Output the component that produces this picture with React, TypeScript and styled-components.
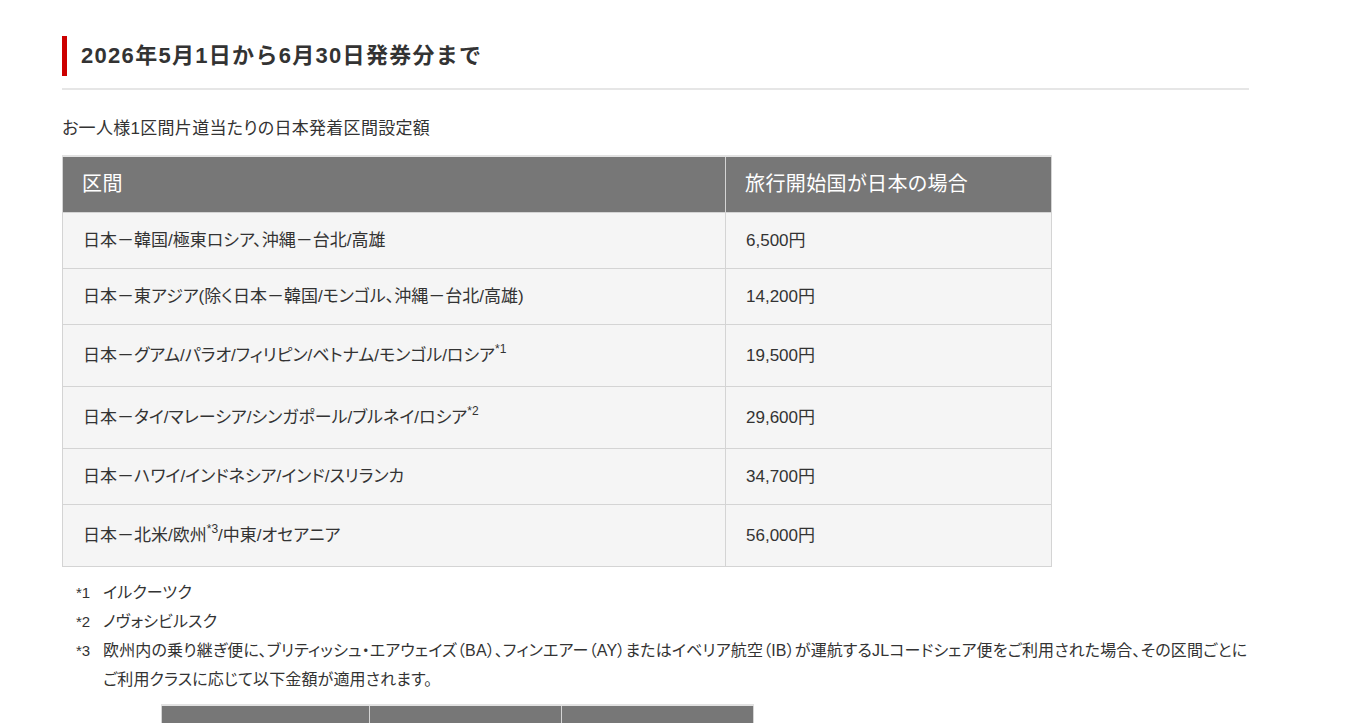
import styled, { createGlobalStyle } from "styled-components";

const GlobalStyle = createGlobalStyle`
  body {
    margin: 0;
    background: #fff;
    color: #333;
    font-family: "Liberation Sans", "Noto Sans CJK JP", sans-serif;
    font-feature-settings: "palt";
  }
`;

const fares = [
  { route: "日本－韓国/極東ロシア、沖縄－台北/高雄", price: "6,500円" },
  { route: "日本－東アジア(除く日本－韓国/モンゴル、沖縄－台北/高雄)", price: "14,200円" },
  { route: "日本－グアム/パラオ/フィリピン/ベトナム/モンゴル/ロシア", sup: "*1", price: "19,500円" },
  { route: "日本－タイ/マレーシア/シンガポール/ブルネイ/ロシア", sup: "*2", price: "29,600円" },
  { route: "日本－ハワイ/インドネシア/インド/スリランカ", price: "34,700円" },
  { route: "日本－北米/欧州", sup: "*3", rest: "/中東/オセアニア", price: "56,000円" },
];

const Page = styled.main`
  padding: 36px 0 0 62px;
  width: 1187px;
`;

const HeadingWrap = styled.div`
  padding-bottom: 12px;
  border-bottom: 2px solid #e6e6e6;
`;

const Heading = styled.h2`
  margin: 0;
  padding-left: 14px;
  border-left: 5px solid #cc0000;
  font-size: 22px;
  font-weight: 700;
  letter-spacing: 1.3px;
  line-height: 40px;
  color: #333;
  font-feature-settings: normal;
`;

const Lead = styled.p`
  margin: 27px 0 0;
  font-size: 17px;
  letter-spacing: 0.3px;
  line-height: 24px;
`;

const FareTable = styled.table`
  margin-top: 14px;
  width: 990px;
  table-layout: fixed;
  border-collapse: collapse;
  border-top: 2px solid #e2e2e2;
`;

const HeadCell = styled.th<{ $w?: number }>`
  box-sizing: border-box;
  width: ${(p) => (p.$w ? `${p.$w}px` : "auto")};
  background: #777;
  color: #fff;
  text-align: left;
  font-weight: 400;
  font-size: 20px;
  letter-spacing: 0.4px;
  line-height: 25px;
  padding: 15px 18px 15px 19px;
  border: 1px solid #d4d4d4;
  border-top: none;
  border-bottom: none;
`;

const Cell = styled.td<{ $tall?: boolean }>`
  box-sizing: border-box;
  background: #f5f5f5;
  padding: ${(p) => (p.$tall ? "19px 18px 18px 20px" : "16px 18px 15px 20px")};
  font-size: 17px;
  line-height: 24px;
  border: 1px solid #d4d4d4;
  color: #333;
`;

const Sup = styled.sup`
  font-size: 12px;
  line-height: 0;
  vertical-align: 8px;
`;

const Notes = styled.ol`
  list-style: none;
  margin: 11px 0 0;
  padding: 0;
  font-size: 16px;
  line-height: 29px;
`;

const Note = styled.li`
  display: grid;
  grid-template-columns: 27px 1fr;
  padding-left: 14px;
`;

const Mark = styled.span`
  font-size: 15px;
`;

const NoteText = styled.span`
  letter-spacing: 0.15px;
`;

const SubTable = styled.table`
  margin: 10px 0 0 99px;
  width: 593px;
  table-layout: fixed;
  border-collapse: collapse;
  border-top: 2px solid #e2e2e2;
`;

export default function App() {
  return (
    <>
      <GlobalStyle />
      <Page>
        <HeadingWrap>
          <Heading>2026年5月1日から6月30日発券分まで</Heading>
        </HeadingWrap>
        <Lead>お一人様1区間片道当たりの日本発着区間設定額</Lead>
        <FareTable>
          <thead>
            <tr>
              <HeadCell $w={663}>区間</HeadCell>
              <HeadCell>旅行開始国が日本の場合</HeadCell>
            </tr>
          </thead>
          <tbody>
            {fares.map((f) => (
              <tr key={f.price}>
                <Cell $tall={!!f.sup}>
                  {f.route}
                  {f.sup && <Sup>{f.sup}</Sup>}
                  {f.rest}
                </Cell>
                <Cell $tall={!!f.sup}>{f.price}</Cell>
              </tr>
            ))}
          </tbody>
        </FareTable>
        <Notes>
          <Note>
            <Mark>*1</Mark>
            <NoteText>イルクーツク</NoteText>
          </Note>
          <Note>
            <Mark>*2</Mark>
            <NoteText>ノヴォシビルスク</NoteText>
          </Note>
          <Note>
            <Mark>*3</Mark>
            <NoteText>
              欧州内の乗り継ぎ便に、ブリティッシュ・エアウェイズ（BA）、フィンエアー（AY）またはイベリア航空（IB）が運航するJLコードシェア便をご利用された場合、その区間ごとにご利用クラスに応じて以下金額が適用されます。
            </NoteText>
          </Note>
        </Notes>
        <SubTable>
          <thead>
            <tr>
              <HeadCell $w={208}>&nbsp;</HeadCell>
              <HeadCell $w={192}>&nbsp;</HeadCell>
              <HeadCell>&nbsp;</HeadCell>
            </tr>
          </thead>
        </SubTable>
      </Page>
    </>
  );
}
